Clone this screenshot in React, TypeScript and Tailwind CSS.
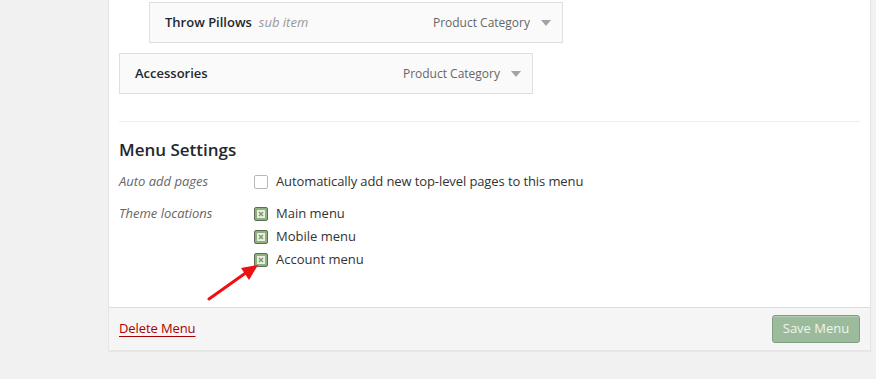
const font = { fontFamily: '"Open Sans", "Noto Sans", sans-serif' };

function MenuItem({ title, sub, indent }: { title: string; sub?: string; indent?: boolean }) {
  return (
    <div
      className={`flex items-center justify-between w-[414px] h-[41px] border border-[#dfdfdf] bg-[#fafafa] pl-[15px] pr-[11px] ${
        indent ? "ml-[30px]" : ""
      }`}
    >
      <div className="flex items-baseline gap-[7px] pt-[1px]">
        <span className="text-[13px] font-semibold text-[#23282d]">{title}</span>
        {sub && <span className="text-[13px] italic text-[#999]">{sub}</span>}
      </div>
      <div className="flex items-center gap-[11px] pt-[1px]">
        <span className="text-[12px] text-[#666]">Product Category</span>
        <svg width="10" height="8" viewBox="0 0 10 8">
          <path d="M0 1 L10 1 L5 7 Z" fill="#a0a5aa" />
        </svg>
      </div>
    </div>
  );
}

function CheckedBox() {
  return (
    <span className="flex items-center justify-center w-[14px] h-[14px] rounded-[2px] border-[1.5px] border-[#5f6c5a] bg-[#8fb27a]">
      <svg width="8" height="8" viewBox="0 0 8 8">
        <rect x="0" y="0" width="8" height="8" fill="#e9efe4" />
        <path d="M2 2 L6 6 M6 2 L2 6" stroke="#7e9a6c" strokeWidth="1.5" />
      </svg>
    </span>
  );
}

export default function App() {
  return (
    <div className="min-h-[379px] bg-[#f1f1f1] pl-[108px] pr-[5px]" style={font}>
      <div className="relative w-[763px] border-x border-b border-[#e5e5e5] bg-white shadow-[0_1px_1px_rgba(0,0,0,0.04)]">
        <div className="px-[10px] pt-[2px]">
          <div className="flex flex-col gap-[10px]">
            <MenuItem title="Throw Pillows" sub="sub item" indent />
            <MenuItem title="Accessories" />
          </div>
          <div className="mt-[27px] border-t border-[#eeeeee]" />
          <h3 className="mt-[16px] text-[17px] font-semibold leading-[24px] text-[#23282d]">Menu Settings</h3>
          <div className="mt-[8px] flex flex-col text-[13px]">
            <div className="flex items-center h-[24px]">
              <span className="w-[135px] italic text-[#666]">Auto add pages</span>
              <span className="w-[14px] h-[14px] rounded-[2px] border border-[#b4b9be] bg-white" />
              <span className="ml-[8px] text-[#333] tracking-[-0.1px]">Automatically add new top-level pages to this menu</span>
            </div>
            <div className="flex mt-[8px]">
              <span className="w-[135px] italic text-[#666] leading-[23px]">Theme locations</span>
              <div className="flex flex-col">
                {["Main menu", "Mobile menu", "Account menu"].map((l) => (
                  <div key={l} className="flex items-center h-[23px] pt-[1px]">
                    <CheckedBox />
                    <span className="ml-[8px] text-[#333]">{l}</span>
                  </div>
                ))}
              </div>
            </div>
          </div>
          <div className="h-[36px]" />
        </div>
        <div className="flex items-center justify-between h-[43px] border-t border-[#dddddd] bg-[#f5f5f5] px-[10px]">
          <a className="text-[13px] text-[#a00] underline decoration-1 underline-offset-[3px] tracking-[-0.1px]">Delete Menu</a>
          <button className="w-[88px] h-[28px] rounded-[3px] border border-[#7f9f80] bg-[#9cbb9c] text-[13px] text-[#eef5ee] shadow-[inset_0_1px_0_rgba(255,255,255,0.25)]">
            Save Menu
          </button>
        </div>
        <svg className="absolute left-[98px] top-[260px]" width="60" height="45" viewBox="0 0 60 45">
          <line x1="2" y1="39" x2="40" y2="12" stroke="#ee1111" strokeWidth="3" strokeLinecap="round" />
          <path d="M51 5 L34 8 L42 20 Z" fill="#ee1111" />
        </svg>
      </div>
    </div>
  );
}
